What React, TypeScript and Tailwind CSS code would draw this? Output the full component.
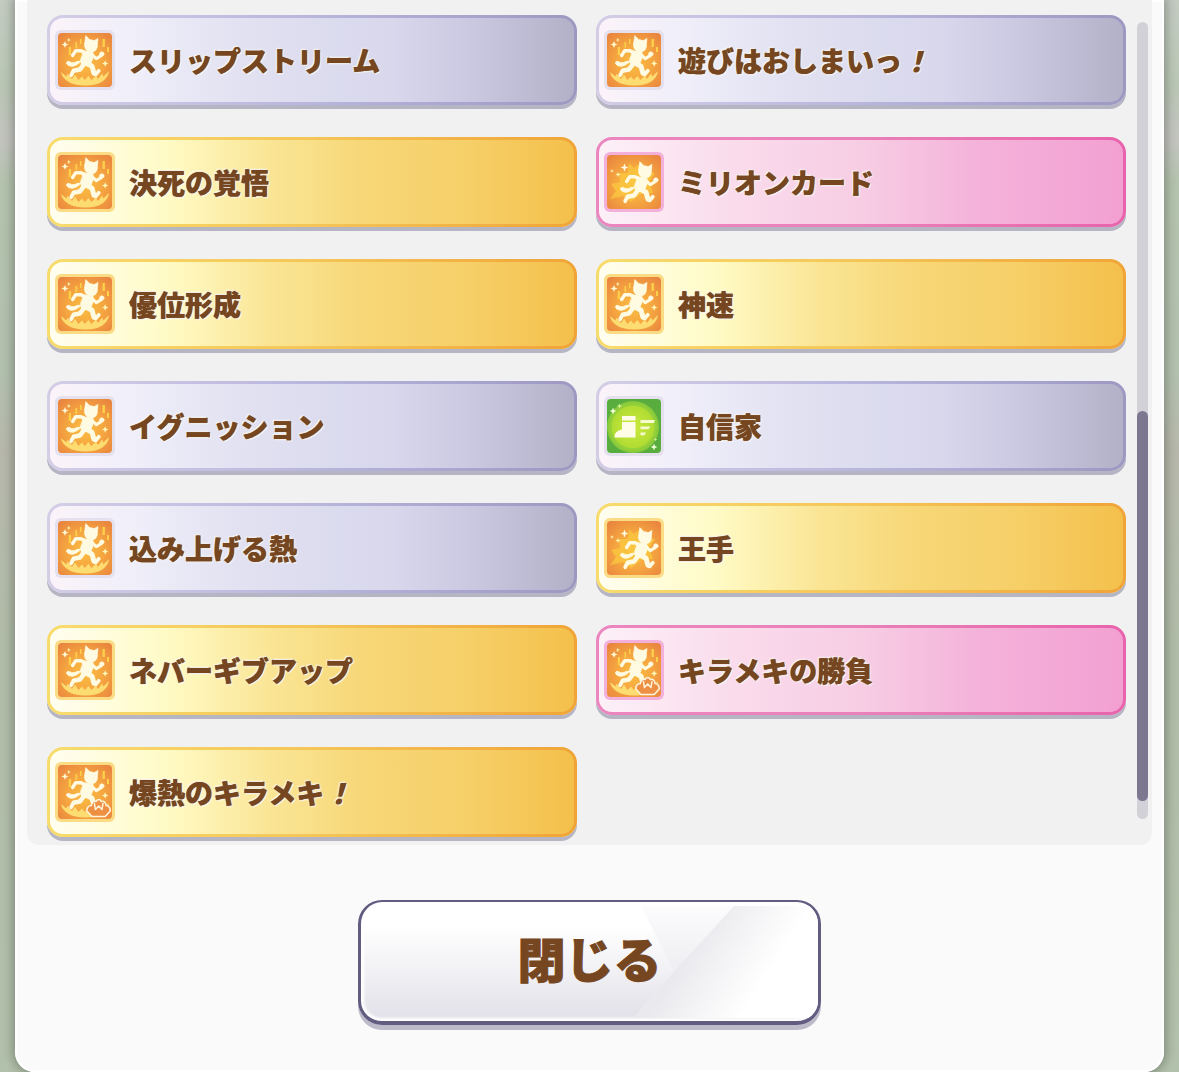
import React from 'react';

type Rarity = 'normal' | 'rare' | 'evolved';
type IconKind = 'accel' | 'dash' | 'speed' | 'accelShell';

interface Skill {
    name: string;
    rarity: Rarity;
    icon: IconKind;
}

const SKILLS: Skill[] = [
    { name: 'スリップストリーム', rarity: 'normal', icon: 'accel' },
    { name: '遊びはおしまいっ！', rarity: 'normal', icon: 'accel' },
    { name: '決死の覚悟', rarity: 'rare', icon: 'accel' },
    { name: 'ミリオンカード', rarity: 'evolved', icon: 'dash' },
    { name: '優位形成', rarity: 'rare', icon: 'accel' },
    { name: '神速', rarity: 'rare', icon: 'accel' },
    { name: 'イグニッション', rarity: 'normal', icon: 'accel' },
    { name: '自信家', rarity: 'normal', icon: 'speed' },
    { name: '込み上げる熱', rarity: 'normal', icon: 'accel' },
    { name: '王手', rarity: 'rare', icon: 'dash' },
    { name: 'ネバーギブアップ', rarity: 'rare', icon: 'accel' },
    { name: 'キラメキの勝負', rarity: 'evolved', icon: 'accelShell' },
    { name: '爆熱のキラメキ！', rarity: 'rare', icon: 'accelShell' },
];

const EDGE: Record<Rarity, string> = {
    normal: 'bg-linear-to-r from-[#d3cde6] via-[#b9b6de] to-[#9c98c2]',
    rare: 'bg-linear-to-r from-[#f7dc6c] via-[#f5c557] to-[#f0a437]',
    evolved: 'bg-linear-to-r from-[#ec86c0] via-[#ea80b9] to-[#e863ab]',
};

const FACE: Record<Rarity, string> = {
    normal: 'bg-[linear-gradient(90deg,#fbf3f9_0%,#f0effa_15%,#e2e2f2_35%,#d8d7ec_65%,#cbc9e2_80%,#b3b1c8_100%)]',
    rare: 'bg-[linear-gradient(90deg,#fffef0_0%,#fffbc6_22%,#fae595_42%,#f7d777_60%,#f6cf68_80%,#f4c04b_100%)]',
    evolved: 'bg-[linear-gradient(90deg,#fcf0f7_0%,#fadcec_25%,#f7cde4_50%,#f4b3da_72%,#f2a0d2_100%)]',
};

const FRAME: Record<Rarity, string> = {
    normal: 'bg-[#e4e0ee]',
    rare: 'bg-[#fbdc85]',
    evolved: 'bg-[#f3b0da]',
};

const Sparkle: React.FC<{ x: number; y: number; r: number; color?: string }> = ({ x, y, r, color = '#fff8b8' }) => (
    <path
        transform={`translate(${x} ${y}) scale(${r})`}
        d="M0-1 .28-.28 1 0 .28.28 0 1-.28.28-1 0-.28-.28Z"
        fill={color}
    />
);

const Runner: React.FC<{ dx?: number; dy?: number }> = ({ dx = 0, dy = 0 }) => (
    <g transform={`translate(${dx} ${dy})`} fill="#fffbe2" stroke="#fffbe2" strokeLinejoin="round" strokeLinecap="round">
        <path strokeWidth=".6" d="M26.6 10.5 27.8 2.6 31.6 6.4 36.2 7.6 40 5.4 39.4 12.2C39.6 16.5 36.6 19.2 32.8 19 28.6 18.8 25.8 15.2 26.6 10.5Z" />
        <path strokeWidth="1" d="M26 18 35 19.5 35 25 32 32 24.5 33 22.5 28Z" />
        <path strokeWidth="3.4" fill="none" d="M27 19.6 22.5 17.6 17.6 17.8 14.6 22.5" />
        <path strokeWidth="3" fill="none" d="M34 21.5 38.2 25.6 43.2 22.6" />
        <circle cx="43.8" cy="21" r="2.1" />
        <path strokeWidth="5" fill="none" d="M28 30 34 33.2 35.6 39" />
        <path strokeWidth="3.8" fill="none" d="M35.6 40.8 37.6 41.4 40.8 37.8" />
        <path strokeWidth="4.6" fill="none" d="M26 31 22 36.4 16.6 37.4" />
        <path strokeWidth="3.8" fill="none" d="M15.6 37.4 13.2 42.2" />
        <path strokeWidth="1" d="M22.5 28.6C18.5 27 17 31.6 12 29 8.6 27.2 8 29.8 9 31 11.4 34 15.8 33.6 18.5 31.8Z" />
    </g>
);

const ShellBadge: React.FC = () => (
    <g strokeLinejoin="round" strokeLinecap="round">
        <path
            d="M34 51.5 28.7 45.8C28.8 42.7 30.5 40.5 33.4 40.6 33.4 37.6 35.6 35.8 38 36.4L39.6 34.8H41.9L43.4 36.4C46 35.8 48.2 37.8 48 40.6 50.8 40.6 52.6 43 52.2 46L47.2 51.5Z"
            fill="#ee9044"
            stroke="#fff4dc"
            strokeWidth="1.5"
        />
        <path d="M36.4 38.5 37.4 44.5 40.7 41 44 44.5 45 38.5" fill="none" stroke="#fff4dc" strokeWidth="1.5" />
    </g>
);

const SkillIcon: React.FC<{ kind: IconKind }> = ({ kind }) => {
    if (kind === 'speed') {
        return (
            <svg viewBox="0 0 54 54" className="size-full rounded-[4px]" aria-hidden="true">
                <defs>
                    <radialGradient id="leaf" cx="50%" cy="50%" r="50%">
                        <stop offset="0" stopColor="#cdea3c" />
                        <stop offset=".8" stopColor="#b0dc33" />
                        <stop offset=".83" stopColor="#98d238" />
                        <stop offset="1" stopColor="#84c83c" />
                    </radialGradient>
                </defs>
                <rect width="54" height="54" fill="#58ad3e" />
                <circle cx="26" cy="28" r="26" fill="url(#leaf)" />
                <path d="M15 17H28.5V21.5H15ZM15 23H28.5V38.5H7.5C7.5 34 10 31.5 15 30.5Z" fill="#fffde8" />
                <path d="M33.5 21H48L47 24H33.5ZM33.5 27.5H43.5L41.5 30.3H33.5ZM33.5 33.5H39L37.5 36.3H33.5Z" fill="#f6fad0" />
                <Sparkle x={6} y={12} r={3.4} color="#f4ffd8" />
                <Sparkle x={12.5} y={7} r={2.6} color="#d6f29a" />
                <Sparkle x={47} y={48} r={3.4} color="#f4ffd8" />
                <Sparkle x={48.5} y={40.5} r={1.8} color="#d6f29a" />
            </svg>
        );
    }

    return (
        <svg viewBox="0 0 54 54" className="size-full rounded-[4px]" aria-hidden="true">
            <defs>
                <radialGradient id={`ember-${kind}`} cx="50%" cy="55%" r="68%">
                    <stop offset="0" stopColor="#fbbd42" />
                    <stop offset=".5" stopColor="#f5a640" />
                    <stop offset="1" stopColor="#e9853f" />
                </radialGradient>
            </defs>
            <rect width="54" height="54" fill={`url(#ember-${kind})`} />
            {kind === 'dash' ? (
                <>
                    <path d="M22 8 27 13 35 7 37 16 48 18 42 27 46 38 34 39 24 47 16 41 3 44 9 36 4 29 13 27 12 18 21 18Z" fill="#fbcb3e" opacity=".7" />
                    <Sparkle x={17.5} y={12.5} r={4} color="#fffbe0" />
                    <Sparkle x={11} y={19.5} r={2.6} />
                    <Sparkle x={5} y={16} r={2} />
                    <Runner dx={5} dy={4} />
                </>
            ) : (
                <>
                    <path d="M10.8 14h2.2v8h-2.2zM17.5 9h1.6v6h-1.6zM44.5 6h2.4v8h-2.4zM49 14h2v5h-2zM22 6h1.5v5H22z" fill="#fdd04a" />
                    <path
                        d="M3 39 8.5 43.6 9.4 40.4 14 46 17 41.6 20.4 47 24 43.4 26.8 47 30.4 43 33.4 47 38 42.4 40 46 44.2 40.6 45.4 43.4 51 38C50 46.5 42 52.6 27.5 52.6 13 52.6 4.6 47 3 39Z"
                        fill="#fddc72"
                    />
                    <Sparkle x={7} y={11.5} r={3.6} color="#fff8d0" />
                    <Sparkle x={10.8} y={7} r={2.2} />
                    <Sparkle x={47.2} y={30.5} r={3.2} />
                    <Runner />
                    {kind === 'accelShell' && <ShellBadge />}
                </>
            )}
        </svg>
    );
};

const SkillName: React.FC<{ name: string }> = ({ name }) => {
    const shout = name.endsWith('！');
    return (
        <span className="text-[28px] leading-8 font-black text-[#754620] whitespace-nowrap [text-shadow:0_0_1px_#754620,1px_1px_1px_#fff,-1px_-1px_1px_#fff,0_0_3px_#fff]">
            {shout ? name.slice(0, -1) : name}
            {shout && <span className="italic">！</span>}
        </span>
    );
};

const SkillCard: React.FC<{ skill: Skill }> = ({ skill }) => (
    <li className={`rounded-2xl p-[3px] shadow-[0_4px_0_#b6b5c4] ${EDGE[skill.rarity]}`}>
        <div className={`flex h-[84px] items-center gap-3.5 rounded-[13px] pl-[5px] ${FACE[skill.rarity]}`}>
            <div className={`size-[60px] shrink-0 rounded-md p-[3px] ${FRAME[skill.rarity]}`}>
                <SkillIcon kind={skill.icon} />
            </div>
            <SkillName name={skill.name} />
        </div>
    </li>
);

const CloseButton: React.FC = () => (
    <button
        type="button"
        className="relative w-[463px] overflow-hidden rounded-3xl border-[3px] border-t-2 border-b-4 border-[#625c80] bg-linear-to-b from-white from-20% to-[#e2e0e8] px-6 pt-6 pb-8 text-5xl leading-[63px] font-black text-[#754620] shadow-[inset_0_0_3px_3px_#fff] [-webkit-text-stroke:1px_#754620]"
    >
        <svg viewBox="0 0 457 118" preserveAspectRatio="none" className="absolute inset-0 size-full" aria-hidden="true">
            <defs>
                <linearGradient id="shine" gradientUnits="userSpaceOnUse" x1="320" y1="62" x2="386" y2="104">
                    <stop offset="0" stopColor="#eaeaee" />
                    <stop offset="1" stopColor="#fff" />
                </linearGradient>
                <linearGradient id="facet" x1="0" y1="0" x2="0" y2="1">
                    <stop offset="0" stopColor="#fcfcfd" />
                    <stop offset="1" stopColor="#eeeef2" />
                </linearGradient>
            </defs>
            <path d="M280 4H373L313 69Z" fill="url(#facet)" />
            <path d="M373 4 313 69 272 115H457V4Z" fill="url(#shine)" />
        </svg>
        <span className="relative">閉じる</span>
    </button>
);

export default function App() {
    return (
        <div className="min-h-screen bg-[linear-gradient(180deg,#c3cbc1_0%,#b9c6b4_8%,#c3c3bf_13%,#b3c3ad_17%,#b2c0ae_35%,#b7b8ab_42%,#b0bca8_60%,#b2c1ab_100%)] px-[15px] font-['Noto_Sans_CJK_JP',sans-serif]">
            <main className="flex min-h-screen flex-col items-center rounded-b-[20px] bg-[#fafafa] px-3 shadow-[0_0_10px_3px_#00000040,inset_0_0_0_2px_#fff]">
                <section className="flex w-full justify-between rounded-b-xl bg-[#f1f1f1] pr-1 pl-5">
                    <ul className="grid grow grid-cols-2 gap-x-[19px] gap-y-8 pt-[15px] pr-[11px] pb-[8px]">
                        {SKILLS.map(skill => (
                            <SkillCard key={skill.name} skill={skill} />
                        ))}
                    </ul>
                    <div className="mt-[22px] mb-[26px] flex w-[11px] shrink-0 flex-col justify-end rounded-full bg-[#d2d1d8] pb-[18px]">
                        <div className="h-[390px] rounded-full bg-[#7d788f]" />
                    </div>
                </section>

                <div className="mt-[55px] mb-10 rounded-3xl shadow-[0_5px_0_#bdbac9]">
                    <CloseButton />
                </div>
            </main>
        </div>
    );
}
